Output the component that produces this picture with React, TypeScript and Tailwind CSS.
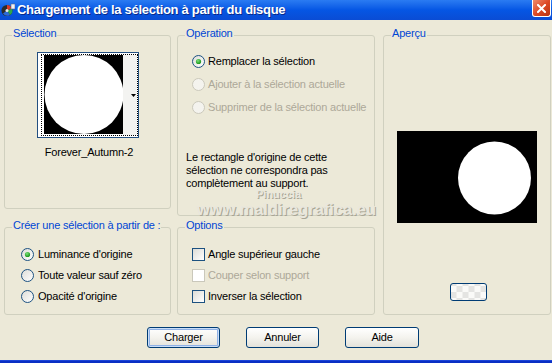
import type { ReactNode } from "react";

function GroupBox({ label, className, children }: { label: string; className: string; children?: ReactNode }) {
    return (
        <div className={`relative rounded-[3px] border border-[#D0D0BF] ${className}`}>
            <span className="absolute left-[7px] -top-[9px] px-[1px] bg-[#ECE9D8] text-[#0046D5] leading-[13px] whitespace-nowrap">
                {label}
            </span>
            {children}
        </div>
    );
}

function Radio({ checked = false, disabled = false }: { checked?: boolean; disabled?: boolean }) {
    return (
        <svg width="13" height="13" viewBox="0 0 13 13" className="shrink-0">
            <defs>
                <linearGradient id="rg" x1="0" y1="0" x2="1" y2="1">
                    <stop offset="0" stopColor="#DCDCD7" />
                    <stop offset="1" stopColor="#FFFFFF" />
                </linearGradient>
                <radialGradient id="dot" cx="0.4" cy="0.35" r="0.6">
                    <stop offset="0" stopColor="#7BE07B" />
                    <stop offset="1" stopColor="#1E9A1E" />
                </radialGradient>
            </defs>
            <circle
                cx="6.5"
                cy="6.5"
                r="6"
                fill={disabled ? "#F4F3EE" : "url(#rg)"}
                stroke={disabled ? "#CAC8BB" : "#1C5180"}
                strokeWidth="1"
            />
            {checked && <circle cx="6.5" cy="6.5" r="2.6" fill="url(#dot)" />}
        </svg>
    );
}

function Check({ disabled = false }: { disabled?: boolean }) {
    return disabled ? (
        <span className="block w-[13px] h-[13px] shrink-0 border border-[#CAC8BB] bg-white" />
    ) : (
        <span className="block w-[13px] h-[13px] shrink-0 border border-[#1C5180] bg-linear-to-br from-[#DCDCD7] to-white" />
    );
}

function XpButton({ children, isDefault = false, width }: { children: ReactNode; isDefault?: boolean; width: string }) {
    return (
        <button
            className={`${width} h-[21px] rounded-[3px] border border-[#003C74] bg-linear-to-b from-white via-[#F4F3EE] to-[#E3E2DA] text-[11px] text-black leading-none ${
                isDefault ? "shadow-[inset_0_0_0_1px_#C9DDF7,inset_0_0_0_2px_#8FB1E6]" : ""
            }`}
        >
            {children}
        </button>
    );
}

export default function App() {
    return (
        <div className="relative w-[552px] h-[363px] overflow-hidden bg-[#ECE9D8] flex flex-col font-['Liberation_Sans',Arial,sans-serif] text-[11px] tracking-[-0.2px] text-black">
            {/* Title bar */}
            <div className="h-[20px] shrink-0 flex items-start justify-between bg-linear-to-b from-[#2A7BF2] via-[#0556E4] to-[#0A4CD4]">
                <div className="flex items-center h-[19px] pl-[1px] gap-[2px]">
                    <svg width="14" height="14" viewBox="0 0 14 14">
                        <circle cx="6" cy="7.5" r="5.5" fill="#2B2B2B" />
                        <path d="M6 7.5 L6 2 A5.5 5.5 0 0 1 11 5.5 Z" fill="#D83A2A" />
                        <path d="M6 7.5 L11 5.5 A5.5 5.5 0 0 1 9 12 Z" fill="#2FA84A" />
                        <path d="M6 7.5 L9 12 A5.5 5.5 0 0 1 2 10.5 Z" fill="#2D6BD8" />
                        <circle cx="6" cy="7.5" r="1.5" fill="#E8E8E8" />
                        <rect x="10" y="1" width="4" height="5" fill="#F2F2F2" stroke="#5A6A8A" strokeWidth="0.6" />
                    </svg>
                    <span className="text-white font-bold text-[13px] tracking-[-0.3px] leading-none [text-shadow:1px_1px_0_#0A2A8A]">
                        Chargement de la sélection à partir du disque
                    </span>
                </div>
                <div className="mr-[1px] w-[19px] h-[17px] rounded-b-[3px] border border-t-0 border-white bg-linear-to-br from-[#EE8A6C] via-[#DD4A26] to-[#B8330F] flex items-center justify-center">
                    <svg width="9" height="9" viewBox="0 0 9 9">
                        <path d="M1 1 L8 8 M8 1 L1 8" stroke="#fff" strokeWidth="2" strokeLinecap="square" />
                    </svg>
                </div>
            </div>

            {/* Group boxes */}
            <div className="flex pl-[4px] pt-[15px]">
                <div className="w-[167px] flex flex-col">
                    <GroupBox label="Sélection" className="h-[174px]">
                        <div className="flex flex-col items-center pt-[16px]">
                            <div className="w-[102px] h-[86px] border border-[#234F80] bg-white pl-[3px] py-[1px] flex">
                                <div className="flex-1 flex border border-dotted border-black pl-[2px]">
                                    <svg width="79" height="79" viewBox="0 0 79 79" className="shrink-0">
                                        <rect width="79" height="79" fill="#000" />
                                        <circle cx="40" cy="39.5" r="39.5" fill="#fff" />
                                    </svg>
                                    <div className="flex-1 bg-[#F3F3F1] flex items-center justify-end pr-[1px]">
                                        <svg width="5" height="3" viewBox="0 0 5 3">
                                            <path d="M0 0 H5 L2.5 3 Z" fill="#000" />
                                        </svg>
                                    </div>
                                </div>
                            </div>
                            <div className="mt-[8px] pl-[3px] leading-[13px]">Forever_Autumn-2</div>
                        </div>
                    </GroupBox>
                    <GroupBox label="Créer une sélection à partir de :" className="h-[88px] mt-[18px]">
                        <div className="flex flex-col gap-[8px] pt-[20px] pl-[16px]">
                            <div className="flex items-center gap-[4px] h-[13px]">
                                <Radio checked />
                                <span>Luminance d'origine</span>
                            </div>
                            <div className="flex items-center gap-[4px] h-[13px]">
                                <Radio />
                                <span>Toute valeur sauf zéro</span>
                            </div>
                            <div className="flex items-center gap-[4px] h-[13px]">
                                <Radio />
                                <span>Opacité d'origine</span>
                            </div>
                        </div>
                    </GroupBox>
                </div>

                <div className="w-[198px] ml-[6px] flex flex-col">
                    <GroupBox label="Opération" className="h-[181px]">
                        <div className="flex flex-col gap-[10px] pt-[19px] pl-[14px]">
                            <div className="flex items-center gap-[3px] h-[13px]">
                                <Radio checked />
                                <span>Remplacer la sélection</span>
                            </div>
                            <div className="flex items-center gap-[3px] h-[13px] text-[#ACA899]">
                                <Radio disabled />
                                <span>Ajouter à la sélection actuelle</span>
                            </div>
                            <div className="flex items-center gap-[3px] h-[13px] text-[#ACA899]">
                                <Radio disabled />
                                <span>Supprimer de la sélection actuelle</span>
                            </div>
                        </div>
                        <p className="mt-[37px] pl-[8px] leading-[13px]">
                            Le rectangle d'origine de cette
                            <br />
                            sélection ne correspondra pas
                            <br />
                            complètement au support.
                        </p>
                    </GroupBox>
                    <GroupBox label="Options" className="h-[88px] mt-[11px]">
                        <div className="flex flex-col gap-[8px] pt-[20px] pl-[14px]">
                            <div className="flex items-center gap-[3px] h-[13px]">
                                <Check />
                                <span>Angle supérieur gauche</span>
                            </div>
                            <div className="flex items-center gap-[3px] h-[13px] text-[#ACA899]">
                                <Check disabled />
                                <span>Couper selon support</span>
                            </div>
                            <div className="flex items-center gap-[3px] h-[13px]">
                                <Check />
                                <span>Inverser la sélection</span>
                            </div>
                        </div>
                    </GroupBox>
                </div>

                <div className="w-[168px] ml-[8px]">
                    <GroupBox label="Aperçu" className="h-[280px]">
                        <div className="pt-[95px] pl-[13px]">
                            <svg width="140" height="92" viewBox="0 0 140 92" className="block">
                                <rect width="140" height="92" fill="#000" />
                                <circle cx="97.5" cy="47" r="36.5" fill="#fff" />
                            </svg>
                            <div className="mt-[60px] ml-[53px] w-[37px] h-[18px] rounded-[3px] border border-[#003C74] bg-[repeating-conic-gradient(#E4E4E2_0%_25%,#FAFAF8_0%_50%)] bg-[length:12px_12px] bg-center" />
                        </div>
                    </GroupBox>
                </div>
            </div>

            {/* Buttons */}
            <div className="flex pl-[147px] gap-[26px] mt-[12px]">
                <XpButton width="w-[73px]" isDefault>
                    Charger
                </XpButton>
                <XpButton width="w-[73px]">Annuler</XpButton>
                <XpButton width="w-[74px]">Aide</XpButton>
            </div>

            <div className="mt-auto h-[3px] bg-[#0A2FC4] border-t border-[#1B44D8]" />

            {/* Watermark */}
            <div className="absolute left-[256px] top-[189px] text-[11px] font-bold tracking-normal text-[#E9E7DD] [text-shadow:1px_1px_0_#A8A596] leading-none">
                Pinuccia
            </div>
            <div className="absolute left-[197px] top-[201px] text-[16.5px] font-bold tracking-normal text-[#E9E7DD] [text-shadow:1px_1px_0_#A8A596] leading-none">
                www.maldiregrafica.eu
            </div>
        </div>
    );
}
